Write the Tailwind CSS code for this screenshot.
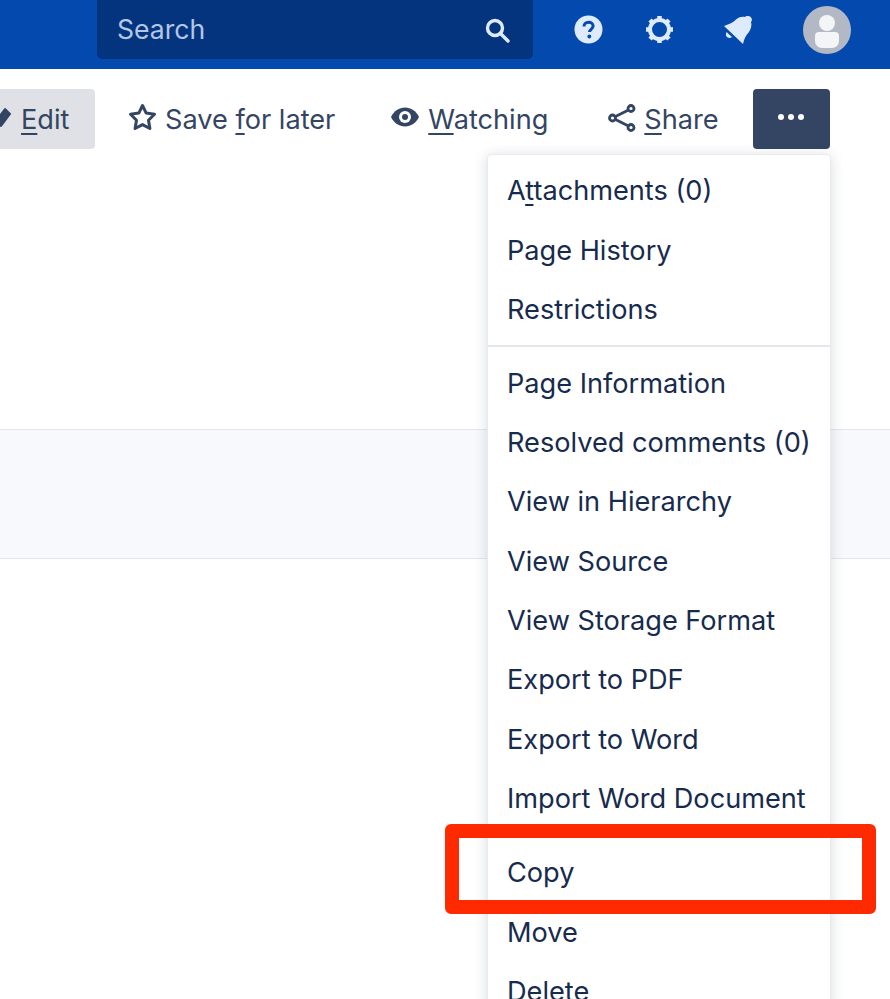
<!DOCTYPE html>
<html>
<head>
<meta charset="utf-8">
<script src="https://cdn.jsdelivr.net/npm/@tailwindcss/browser@4"></script>
</head>
<body class="bg-white overflow-hidden">
<div class="relative w-[890px] h-[999px] overflow-hidden bg-white font-['Inter','Liberation_Sans',sans-serif]">
  <header class="h-[69px] bg-[#0349ae] border-b border-[#0747a6] flex items-start pl-[97px]">
    <div class="w-[436px] h-[59px] bg-[#03347d] rounded-b-[5px] flex items-center justify-between pl-[20px] pr-[23px]">
      <span class="text-[26.6px] text-[#b3c6e6]">Search</span>
      <svg class="w-[26px] h-[26px]" viewBox="0 0 26 26" fill="none" stroke="#deebff" stroke-width="3.4" stroke-linecap="round"><circle cx="11" cy="11" r="7.500"/><path d="M17 17l7 7"/></svg>
    </div>
    <div class="flex items-center h-[59px]">
      <svg class="ml-[41px] w-[29px] h-[29px]" viewBox="0 0 29 29"><circle cx="14.5" cy="14.5" r="14" fill="#deebff"/><path d="M10 11.5c0-2.6 2-4.3 4.6-4.3 2.600 0 4.500 1.600 4.500 3.900 0 3.200-3.700 3.300-3.700 6" fill="none" stroke="#0349ae" stroke-width="3"/><circle cx="15.300" cy="21.500" r="1.900" fill="#0349ae"/></svg>
      <svg class="ml-[42px] w-[29px] h-[29px]" viewBox="0 0 29 29" fill="none" stroke="#deebff"><circle cx="14.500" cy="14.500" r="9.500" stroke-width="4"/><path d="M14.500 1v4M14.500 24v4M1 14.500h4M24 14.500h4M5 5l3 3M21 21l3 3M24 5l-3 3M8 21l-3 3" stroke-width="4.500"/></svg>
      <svg class="ml-[49px] w-[30px] h-[29px]" viewBox="0 0 30 29" fill="#deebff"><path d="M1 11C5 9.500 10 8 13 4.500 15 2.500 19 1 22 2c1-1.500 5-1.500 6 .500 1.500 1.500 1 3.500 0 4.500 1 3 0 7-2 10-3 3-5 7-6 12z"/><path d="M3.500 17l5.500 5c-2 1.500-4.500 1-5.500-.500-.800-1.200-.800-3 0-4.500z"/></svg>
      <div class="ml-[50px] w-[48px] h-[48px] rounded-full bg-[#b3b9c4] relative overflow-hidden flex flex-col items-center pt-[9px]">
        <div class="w-[16px] h-[16px] rounded-full bg-[#f4f5f7]"></div>
        <div class="mt-[1px] w-[24px] h-[16px] rounded-t-[4px] rounded-b-[7px] bg-[#f4f5f7]"></div>
      </div>
    </div>
  </header>

  <div class="absolute left-[-40px] top-[89px] h-[60px] flex items-center text-[27.15px] text-[#344563] whitespace-nowrap">
    <div class="h-[60px] w-[135px] bg-[#dfe1e6] rounded-[4px] flex items-center pl-[33px]">
      <svg class="w-[20px] h-[22px] mr-[8px] shrink-0 overflow-visible -mt-[4px]" viewBox="0 0 20 22" fill="#344563" stroke="#344563" stroke-width="2" stroke-linejoin="round"><path d="M3 15L12 3l5 5L8 20z"/></svg>
      <span class="pt-[2px]"><span class="underline underline-offset-[4px]">E</span>dit</span>
    </div>
    <div class="ml-[33px] flex items-center">
      <svg class="w-[29px] h-[28px] mr-[8px] -mt-[3px]" viewBox="0 0 29 28" fill="none" stroke="#344563" stroke-width="3" stroke-linejoin="round"><path d="M14.500 2.500l3.700 7.600 8.300 1.200-6 5.900 1.400 8.300-7.400-3.900-7.400 3.900 1.400-8.300-6-5.900 8.300-1.200z"/></svg>
      <span class="pt-[2px]">Save <span class="underline underline-offset-[4px]">f</span>or later</span>
    </div>
    <div class="ml-[56px] flex items-center">
      <svg class="w-[28px] h-[20px] mr-[9px] -mt-[4px]" viewBox="0 0 28 20"><path d="M0 10C3 4 8 .500 14 .500S25 4 28 10c-3 6-8 9.500-14 9.500S3 16 0 10z" fill="#344563"/><circle cx="14" cy="10" r="6" fill="#fff"/><circle cx="14" cy="10" r="3" fill="#344563"/></svg>
      <span class="pt-[2px]"><span class="underline underline-offset-[4px]">W</span>atching</span>
    </div>
    <div class="ml-[60px] flex items-center">
      <svg class="w-[28px] h-[28px] mr-[8px] -mt-[2px]" viewBox="0 0 28 28" fill="none" stroke="#344563" stroke-width="2.800"><circle cx="4.500" cy="14" r="3"/><circle cx="23" cy="4.500" r="3"/><circle cx="23" cy="23.500" r="3"/><path d="M7.500 12.500l13-6.500M7.500 15.500l13 6.500"/></svg>
      <span class="pt-[2px]"><span class="underline underline-offset-[4px]">S</span>hare</span>
    </div>
    <div class="ml-[34px] w-[77px] h-[60px] bg-[#344563] rounded-[4px] flex items-center justify-center gap-[4px] pb-[5px]">
      <span class="w-[6px] h-[6px] rounded-full bg-white"></span>
      <span class="w-[6px] h-[6px] rounded-full bg-white"></span>
      <span class="w-[6px] h-[6px] rounded-full bg-white"></span>
    </div>
  </div>

  <div class="absolute left-0 right-0 top-[429px] h-[130px] bg-[#f8f9fc] border-y border-[#e4e6ea]"></div>

  <div class="absolute left-[487px] top-[154px] w-[344px] h-[900px] bg-white rounded-[4px] border border-[#e8eaee] shadow-[0_2px_14px_rgba(9,30,66,0.16)] text-[27.15px] text-[#172b4d]">
    <div class="pt-[7px] pb-[5px]">
      <div class="h-[59.4px] flex items-center pl-[19px]"><span>A<span class="underline underline-offset-[4px]">t</span>tachments (0)</span></div>
      <div class="h-[59.4px] flex items-center pl-[19px]">Page History</div>
      <div class="h-[59.4px] flex items-center pl-[19px]">Restrictions</div>
    </div>
    <div class="h-[2px] bg-[#e4e6ea]"></div>
    <div class="pt-[7px] pb-[7px]">
      <div class="h-[59.4px] flex items-center pl-[19px]">Page Information</div>
      <div class="h-[59.4px] flex items-center pl-[19px]">Resolved comments (0)</div>
      <div class="h-[59.4px] flex items-center pl-[19px]">View in Hierarchy</div>
      <div class="h-[59.4px] flex items-center pl-[19px]">View Source</div>
      <div class="h-[59.4px] flex items-center pl-[19px]">View Storage Format</div>
      <div class="h-[59.4px] flex items-center pl-[19px]">Export to PDF</div>
      <div class="h-[59.4px] flex items-center pl-[19px]">Export to Word</div>
      <div class="h-[59.4px] flex items-center pl-[19px]">Import Word Document</div>
    </div>
    <div class="pt-[7.5px]">
      <div class="h-[59.4px] flex items-center pl-[19px]">Copy</div>
      <div class="h-[59.4px] flex items-center pl-[19px]">Move</div>
      <div class="h-[59.4px] flex items-center pl-[19px]">Delete</div>
    </div>
  </div>

  <div class="absolute left-[445px] top-[824px] w-[431px] h-[90px] border-[14px] border-[#ff2a00] rounded-[6px]"></div>
</div>
</body>
</html>
